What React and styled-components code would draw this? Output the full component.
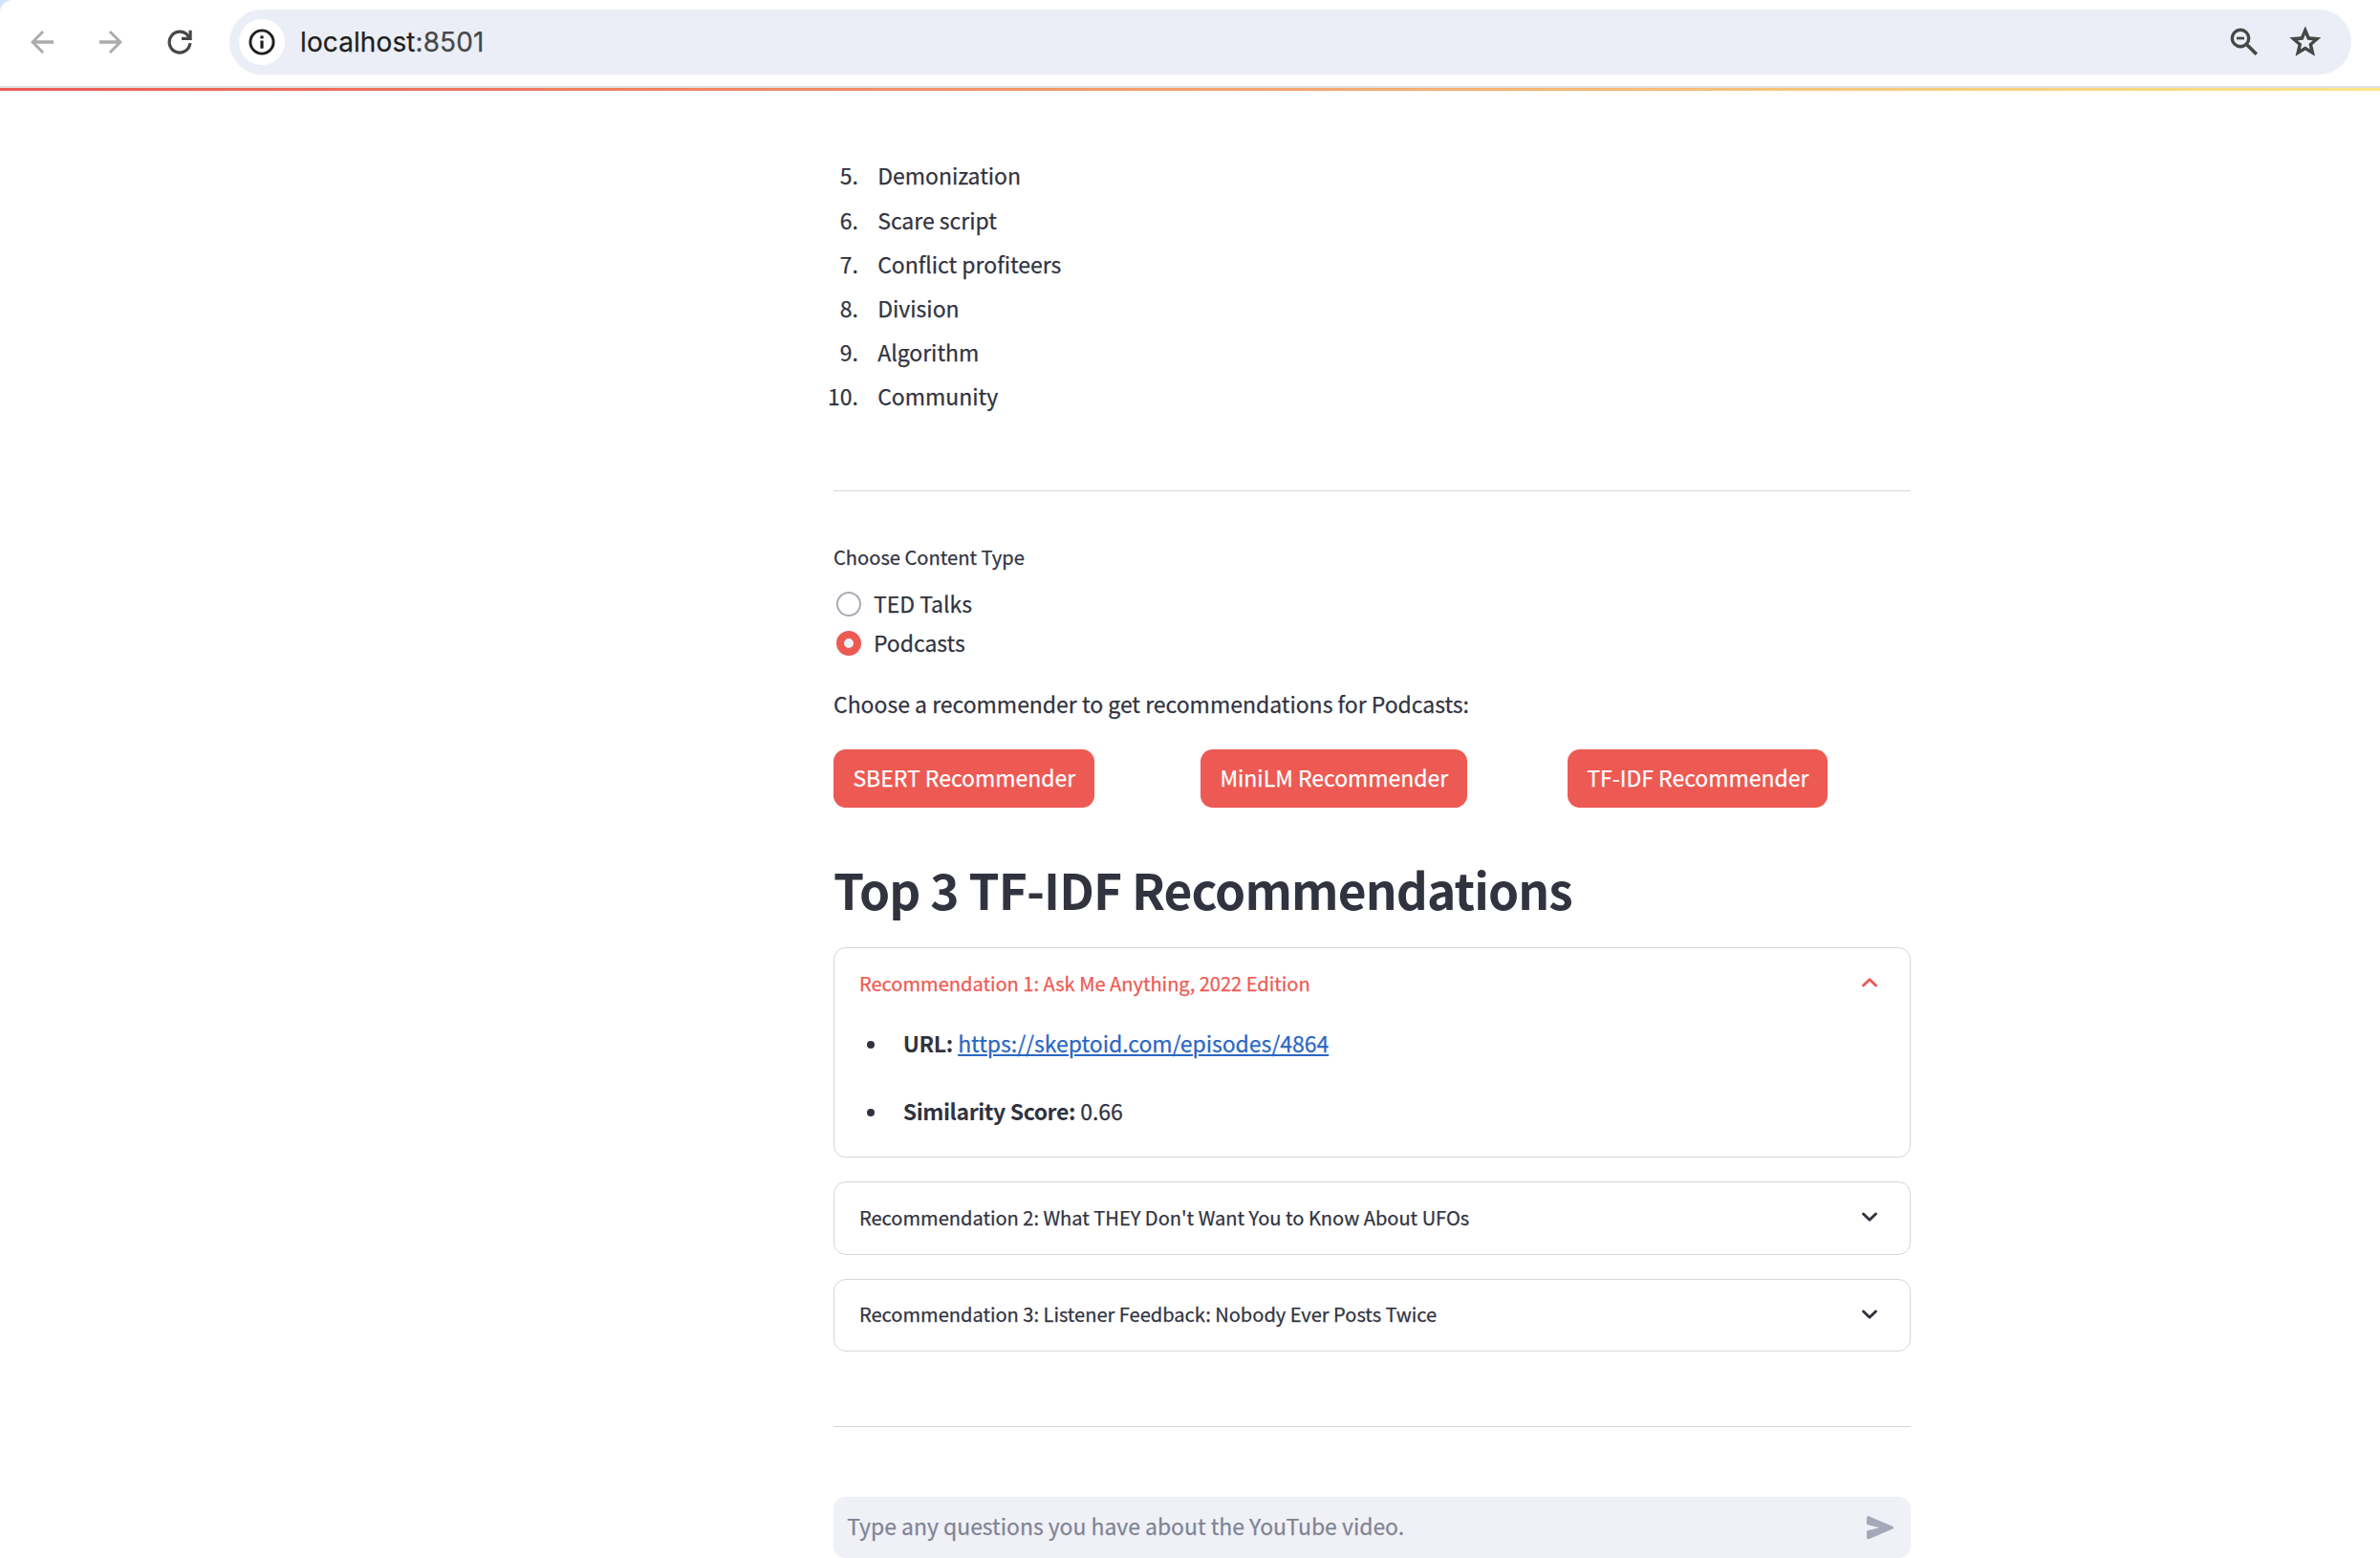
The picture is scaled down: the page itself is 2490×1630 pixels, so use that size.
import React from "react";
import styled, { createGlobalStyle } from "styled-components";

const ink = "#31333f";
const accent = "#ed5a53";
const line = "#d6d6d9";

const GlobalStyle = createGlobalStyle`
  *, *::before, *::after { box-sizing: border-box; }
  html, body { margin: 0; padding: 0; background: #fff; }
  body {
    color: ${ink};
    font-family: "Noto Sans CJK SC", "Noto Sans", sans-serif;
    font-size: 22.97px;
    -webkit-text-stroke: 0.25px currentColor;
    overflow: hidden;
  }
  svg { display: block; flex: none; }
`;

const Page = styled.div`
  width: 2490px;
  height: 1630px;
  overflow: hidden;
`;

/* Browser chrome */
const ToolbarBackdrop = styled.header`
  background: #d3e3fd;
`;

const Toolbar = styled.div`
  display: flex;
  align-items: center;
  height: 92px;
  padding: 0 30px 2px 26px;
  background: #fff;
  border-bottom: 2px solid #dfe1e3;
  border-top-left-radius: 13px;
`;

const NavIcons = styled.nav`
  display: flex;
  align-items: center;
  margin-right: 39px;
  color: #ababab;
`;

const NavButton = styled.span`
  margin-right: ${(p) => p.$gap || 0}px;
  color: ${(p) => (p.$active ? "#474747" : "inherit")};
`;

const AddressBar = styled.div`
  flex: 1;
  display: flex;
  align-items: center;
  height: 68px;
  padding: 0 28px 0 10px;
  border-radius: 34px;
  background: #ebeef6;
  color: #474747;
`;

const SiteInfo = styled.span`
  display: flex;
  align-items: center;
  justify-content: center;
  width: 48px;
  height: 48px;
  margin-right: 16px;
  border-radius: 50%;
  background: #fff;
  color: #1f1f1f;
`;

const Url = styled.span`
  flex: 1;
  font-family: Inter, Roboto, sans-serif;
  font-size: 28px;
  line-height: 40px;
  letter-spacing: 0.1px;
`;

const Host = styled.span`
  color: #1f1f1f;
`;

const BarActions = styled.span`
  display: flex;
  align-items: center;
  gap: 29.4px;
`;

const Decoration = styled.div`
  height: 3px;
  background: linear-gradient(90deg, #ed5a53, #fae685);
`;

/* App content */
const Main = styled.main`
  width: 1127px;
  margin-left: 872px;
  padding-top: 65px;
`;

const TopicList = styled.ol`
  height: 277px;
  margin: 0 0 0 -13px;
  padding: 0.4px 0 0;
  list-style: none;
`;

const Topic = styled.li`
  display: flex;
  height: 46.14px;
  line-height: 46px;
`;

const TopicNumber = styled.span`
  width: 39px;
  margin-right: 20.2px;
  text-align: right;
`;

const Divider = styled.hr`
  height: 1px;
  margin: ${(p) => p.$top}px 0 0;
  border: 0;
  background: ${line};
`;

const FieldLabel = styled.div`
  margin-top: 53px;
  font-size: 20.12px;
  line-height: 32px;
`;

const RadioGroup = styled.div`
  display: flex;
  flex-direction: column;
  gap: 1px;
  margin-top: 13px;
`;

const RadioOption = styled.label`
  display: flex;
  align-items: center;
  gap: 12.9px;
  height: 40px;
  padding-left: 3px;
`;

const RadioMark = styled.span`
  width: 26px;
  height: 26px;
  border: ${(p) => (p.$checked ? `8px solid ${accent}` : "2px solid #a9acb4")};
  border-radius: 50%;
  background: ${(p) => (p.$checked ? "#f0f2f6" : "#fff")};
`;

const RadioText = styled.span`
  padding-bottom: 2px;
  line-height: 38px;
`;

const Prompt = styled.p`
  margin: 23px 0 28px;
  line-height: 40px;
`;

const ButtonColumns = styled.div`
  display: grid;
  grid-template-columns: repeat(3, 358.4px);
  column-gap: 25.6px;
`;

const RecommendButton = styled.button`
  justify-self: start;
  height: 61px;
  padding: 0 19.6px 3px 20.4px;
  border: 0;
  border-radius: 12.8px;
  background: ${accent};
  color: #fff;
  font: inherit;
  line-height: 40px;
  white-space: nowrap;
`;

const Heading = styled.h2`
  margin: 50px 0 27px;
  font-size: 51.4px;
  font-weight: 700;
  line-height: 69px;
  letter-spacing: -0.88px;
  -webkit-text-stroke: 0;
`;

const Expander = styled.section`
  height: ${(p) => p.$height}px;
  margin-bottom: 25px;
  border: 1px solid ${line};
  border-radius: 12.8px;

  &:last-of-type { margin-bottom: 0; }
`;

const Summary = styled.div`
  display: flex;
  align-items: center;
  justify-content: space-between;
  height: ${(p) => p.$height}px;
  padding: 0 26px 3px 26px;
  color: ${(p) => (p.$open ? accent : ink)};
  font-size: 20.06px;
  line-height: 32px;
`;

const SummaryText = styled.span`
  padding-top: 1px;
`;

const Details = styled.ul`
  display: flex;
  flex-direction: column;
  gap: 31px;
  margin: 0;
  padding: 4px 0 0 34px;
  list-style: none;
`;

const Detail = styled.li`
  display: flex;
  align-items: center;
  height: 40px;
  line-height: 40px;

  &::before {
    content: "";
    width: 8.4px;
    height: 8.4px;
    margin: 4px 29.4px 0 0;
    border-radius: 50%;
    background: ${ink};
  }
`;

const Term = styled.strong`
  font-weight: 700;
  letter-spacing: -0.4px;
  -webkit-text-stroke: 0;
`;

const Link = styled.a`
  margin-left: 0.2px;
  color: #2a67c4;
  letter-spacing: -0.02px;
  text-decoration: underline;
  text-decoration-thickness: 2px;
  text-underline-offset: 2px;
`;

const ChatInput = styled.div`
  display: flex;
  align-items: center;
  justify-content: space-between;
  height: 64px;
  margin-top: 73px;
  padding: 0 18px 0 14.2px;
  border-radius: 12.8px;
  background: #f0f1f6;
  color: #a4a8b8;
`;

const Placeholder = styled.span`
  padding-bottom: 4px;
  color: #808495;
  font-size: 22.93px;
  line-height: 40px;
`;

const BackIcon = () => (
  <svg width="36" height="36" viewBox="0 0 24 24" fill="currentColor">
    <path d="M20 10.9H7.83l5.59-5.49L12 4l-8 8 8 8 1.41-1.41L7.83 13.1H20z" />
  </svg>
);

const ForwardIcon = () => (
  <svg width="36" height="36" viewBox="0 0 24 24" fill="currentColor">
    <path d="M4 10.9h12.17l-5.59-5.49L12 4l8 8-8 8-1.41-1.41 5.58-5.49H4z" />
  </svg>
);

const ReloadIcon = () => (
  <svg width="26" height="26" viewBox="0 0 26 26" fill="none" stroke="currentColor" strokeWidth="3.2">
    <path d="M23.9 14.2A10.9 10.9 0 1 1 21.8 6.6L24 10" />
    <path d="M24.1 .7V9.4H15" />
  </svg>
);

const InfoIcon = () => (
  <svg width="28" height="28" viewBox="0 0 28 28" fill="currentColor">
    <circle cx="14" cy="14" r="12.1" fill="none" stroke="currentColor" strokeWidth="2.9" />
    <rect x="12.4" y="7.4" width="3.2" height="3" />
    <rect x="12.4" y="12.5" width="3.2" height="8.2" />
  </svg>
);

const ZoomOutIcon = () => (
  <svg width="30" height="30" viewBox="0 0 30 30" fill="none" stroke="currentColor">
    <circle cx="11" cy="11" r="8.7" strokeWidth="3.4" />
    <path d="M17.2 17.2 27.8 27.8" strokeWidth="3.7" />
    <path d="M7 11h8" strokeWidth="2.7" />
  </svg>
);

const StarIcon = () => (
  <svg width="39.6" height="39.6" viewBox="0 0 24 24" fill="currentColor">
    <path d="M22 9.24l-7.19-.62L12 2 9.19 8.63 2 9.24l5.46 4.73L5.82 21 12 17.27 18.18 21l-1.63-7.03L22 9.24zM12 14.9l-3 1.82.8-3.42-2.65-2.3 3.5-.3L12 7.47l1.36 3.23 3.5.3-2.65 2.3.8 3.42L12 14.9z" />
  </svg>
);

const Chevron = ({ up }) => (
  <svg width="32" height="32" viewBox="0 0 32 32" fill="none" stroke="currentColor" strokeWidth="2.9" strokeLinejoin="round" strokeLinecap="round">
    <path d={up ? "M9.5 19 16 12.7 22.5 19" : "M9.5 13 16 19.3 22.5 13"} />
  </svg>
);

const SendIcon = () => (
  <svg width="28.3" height="24.6" viewBox="0 0 28.3 24.6" fill="currentColor">
    <path d="M0 1.8Q0-.4 2.1.3L27.2 11Q29.4 12.3 27.2 13.6L2.1 24.3Q0 25 0 22.8V16.6Q0 15.5 1.1 15.3L13 12.3 1.1 9.3Q0 9.1 0 8Z" />
  </svg>
);

const topics = [
  [5, "Demonization"],
  [6, "Scare script"],
  [7, "Conflict profiteers"],
  [8, "Division"],
  [9, "Algorithm"],
  [10, "Community"],
];

export default function App() {
  return (
    <Page>
      <GlobalStyle />
      <ToolbarBackdrop>
        <Toolbar>
          <NavIcons>
            <NavButton $gap={36}><BackIcon /></NavButton>
            <NavButton $gap={41}><ForwardIcon /></NavButton>
            <NavButton $active><ReloadIcon /></NavButton>
          </NavIcons>
          <AddressBar>
            <SiteInfo><InfoIcon /></SiteInfo>
            <Url><Host>localhost</Host>:8501</Url>
            <BarActions>
              <ZoomOutIcon />
              <StarIcon />
            </BarActions>
          </AddressBar>
        </Toolbar>
      </ToolbarBackdrop>
      <Decoration />
      <Main>
        <TopicList>
          {topics.map(([n, name]) => (
            <Topic key={n}>
              <TopicNumber>{n}.</TopicNumber>
              <span>{name}</span>
            </Topic>
          ))}
        </TopicList>
        <Divider $top={76} />
        <FieldLabel>Choose Content Type</FieldLabel>
        <RadioGroup>
          <RadioOption>
            <RadioMark />
            <RadioText>TED Talks</RadioText>
          </RadioOption>
          <RadioOption>
            <RadioMark $checked />
            <RadioText>Podcasts</RadioText>
          </RadioOption>
        </RadioGroup>
        <Prompt>Choose a recommender to get recommendations for Podcasts:</Prompt>
        <ButtonColumns>
          <RecommendButton>SBERT Recommender</RecommendButton>
          <RecommendButton>MiniLM Recommender</RecommendButton>
          <RecommendButton>TF-IDF Recommender</RecommendButton>
        </ButtonColumns>
        <Heading>Top 3 TF-IDF Recommendations</Heading>
        <Expander $height={220}>
          <Summary $open $height={75}>
            <SummaryText>Recommendation 1: Ask Me Anything, 2022 Edition</SummaryText>
            <Chevron up />
          </Summary>
          <Details>
            <Detail>
              <span>
                <Term>URL:</Term> <Link>https://skeptoid.com/episodes/4864</Link>
              </span>
            </Detail>
            <Detail>
              <span>
                <Term>Similarity Score:</Term> 0.66
              </span>
            </Detail>
          </Details>
        </Expander>
        <Expander $height={77}>
          <Summary $height={75}>
            <SummaryText>Recommendation 2: What THEY Don't Want You to Know About UFOs</SummaryText>
            <Chevron />
          </Summary>
        </Expander>
        <Expander $height={76}>
          <Summary $height={74}>
            <SummaryText>Recommendation 3: Listener Feedback: Nobody Ever Posts Twice</SummaryText>
            <Chevron />
          </Summary>
        </Expander>
        <Divider $top={78} />
        <ChatInput>
          <Placeholder>Type any questions you have about the YouTube video.</Placeholder>
          <SendIcon />
        </ChatInput>
      </Main>
    </Page>
  );
}
